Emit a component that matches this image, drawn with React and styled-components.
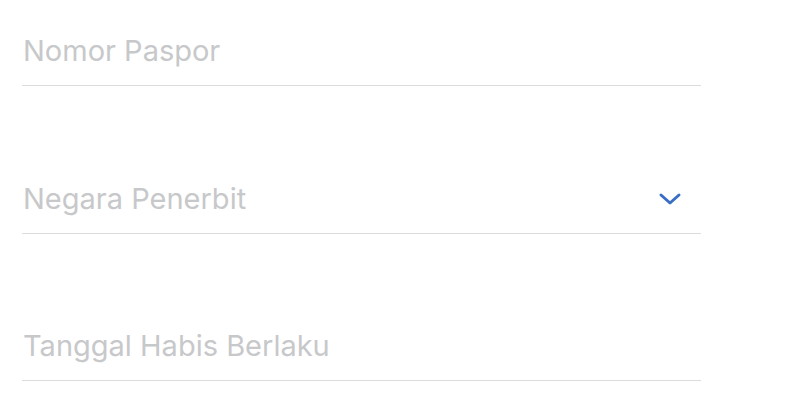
import React from "react";
import styled, { createGlobalStyle } from "styled-components";

const GlobalStyle = createGlobalStyle`
  html, body {
    margin: 0;
    padding: 0;
    background: #ffffff;
    font-family: Inter, "Noto Sans", "Liberation Sans", sans-serif;
  }
`;

const ChevronDown = () => (
  <svg width="24" height="14" viewBox="0 0 24 14" fill="none">
    <path
      d="M3 3 L12 11 L21 3"
      stroke="#3a6ec4"
      strokeWidth="3"
      strokeLinecap="round"
      strokeLinejoin="round"
    />
  </svg>
);

const fields = [
  { label: "Nomor Paspor" },
  { label: "Negara Penerbit", select: true },
  { label: "Tanggal Habis Berlaku" },
];

const App = () => {
  return (
    <Page>
      <GlobalStyle />
      <Form>
        {fields.map((f) => (
          <Field key={f.label}>
            <Placeholder>{f.label}</Placeholder>
            {f.select && (
              <IconSlot>
                <ChevronDown />
              </IconSlot>
            )}
          </Field>
        ))}
      </Form>
    </Page>
  );
};

const Page = styled.div`
  width: 802px;
  height: 409px;
  overflow: hidden;
`;

const Form = styled.div`
  display: flex;
  flex-direction: column;
  gap: 61.5px;
  width: 679px;
  padding-left: 22px;
`;

const Field = styled.div`
  height: 68px;
  display: flex;
  align-items: flex-end;
  justify-content: space-between;
  border-bottom: 1px solid #dcdcdc;
  padding-bottom: 17px;
`;

const Placeholder = styled.span`
  font-size: 29px;
  line-height: 34px;
  color: #c7c8ca;
  padding-left: 1px;
`;

const IconSlot = styled.div`
  display: flex;
  align-items: center;
  height: 34px;
  margin-right: 19px;
`;

export default App;
